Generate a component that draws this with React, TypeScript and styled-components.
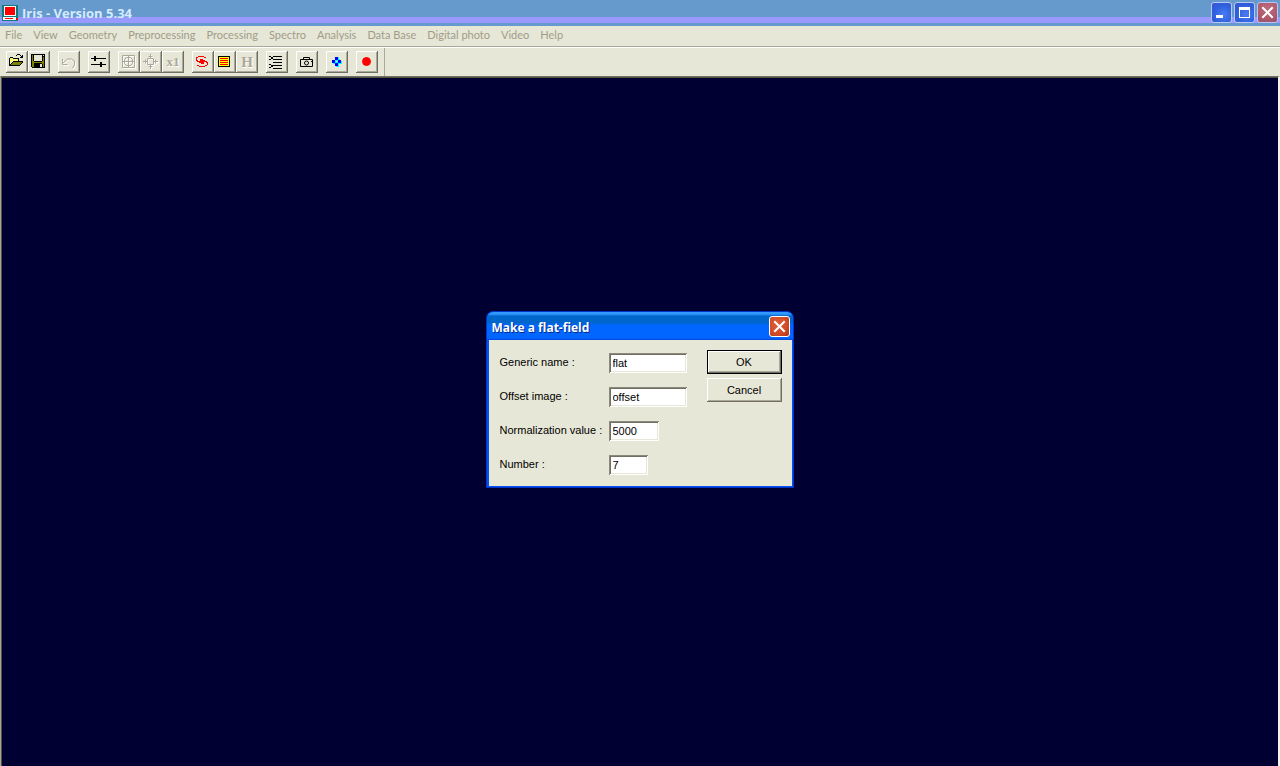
import React from "react";
import styled, { createGlobalStyle, css } from "styled-components";

const face = "#e7e7d7";
const shade = "#aca899";
const uiFont = '"Liberation Sans", Arial, sans-serif';
const menuFont = 'Lato, "Liberation Sans", sans-serif';
const captionFont = '"Open Sans", "Noto Sans", sans-serif';

const GlobalStyle = createGlobalStyle`
  *, *::before, *::after { box-sizing: border-box; }
  body { margin: 0; background: #000033; font-family: ${uiFont}; font-size: 11px; line-height: 14px; }
  button, input { font: inherit; }
`;

const AppWindow = styled.div`
  display: flex;
  flex-direction: column;
  min-height: 100vh;
  background: ${face};
`;

const TitleBar = styled.header`
  display: flex;
  align-items: center;
  gap: 4px;
  height: 26px;
  padding: 0 2px;
  background: linear-gradient(#6699cc 17px, #9999ff 17px, #9999ff 23px, #6699cc 23px);
`;

const AppTitle = styled.h1`
  flex: 1;
  margin: 0;
  font: 700 13px/16px ${captionFont};
  color: #d4ecff;
`;

const CaptionButtons = styled.div`
  display: flex;
  gap: 2px;
  padding-bottom: 1px;
`;

const captionFill = {
  blue: "radial-gradient(circle at 60% 60%, #4a7cf4, #2f5fdc 60%, #3a55c8)",
  faded: "radial-gradient(circle at 50% 30%, #c06a80, #b05a6c 60%, #94506c)",
  red: "radial-gradient(circle at 40% 40%, #e0603c, #d04a28 60%, #b03010)",
};

const CaptionButton = styled.button<{ $tone: keyof typeof captionFill }>`
  display: flex;
  flex: none;
  width: 21px;
  height: 21px;
  padding: 0;
  border: 1px solid ${(p) => (p.$tone === "red" ? "#ffffff" : "#b8c8f4")};
  border-radius: 3px;
  background: ${(p) => captionFill[p.$tone]};
`;

const MenuBar = styled.nav`
  display: flex;
  gap: 11px;
  height: 20px;
  padding: 2px 5px;
  font-family: ${menuFont};
  font-variant-ligatures: none;
`;

const MenuLink = styled.a`
  color: #9f9c88;
  text-decoration: none;
  white-space: nowrap;
`;

const ToolBar = styled.div`
  display: flex;
  height: 30px;
  border-top: 1px solid ${shade};
  box-shadow: inset 0 1px #ffffff;
  padding: 1px 0 0 6px;
`;

const ToolGroups = styled.div`
  display: flex;
  gap: 8px;
  padding: 3px 6px 0 0;
  border-right: 1px solid ${shade};
`;

const ToolGroup = styled.div`
  display: flex;
`;

const raised = css`
  box-shadow: inset -1px -1px #716f64, inset 1px 1px #ffffff, inset -2px -2px ${shade};
`;

const ToolButton = styled.button`
  display: flex;
  width: 22px;
  height: 22px;
  padding: 3px;
  border: 0;
  background: ${face};
  ${raised}
`;

const GlyphButton = styled(ToolButton)<{ $size: number }>`
  align-items: center;
  justify-content: center;
  font: 700 ${(p) => p.$size}px/16px "Liberation Serif", serif;
  color: ${shade};
  text-shadow: 1px 1px #ffffff;
`;

const Workspace = styled.main`
  flex: 1;
  display: flex;
  justify-content: center;
  align-items: flex-start;
  padding: 234px 0 16px;
  background: #000033;
  border: solid;
  border-width: 1px 2px 0 1px;
  border-color: #716f64 #f4f4ea #716f64 ${shade};
  box-shadow: inset 1px 1px #55533f;
`;

const Dialog = styled.section`
  width: 308px;
  border: 1px solid #0033cc;
  border-radius: 7px 7px 0 0;
  background: #0033cc;
`;

const DialogCaption = styled.div`
  display: flex;
  align-items: center;
  justify-content: space-between;
  height: 28px;
  padding: 2px 3px 1px 5px;
  border-radius: 6px 6px 0 0;
  background: linear-gradient(#3399ff 2px, #0066cc 4px, #0066cc 11px, #0066ff 13px, #0066ff 26px, #0044dd);
`;

const DialogTitle = styled.h2`
  margin: 0;
  padding-top: 2px;
  font: 700 12px/16px ${captionFont};
  color: #ffffff;
  text-shadow: 1px 1px #00298c;
`;

const DialogForm = styled.form`
  display: flex;
  justify-content: space-between;
  padding: 10px 10px 11px 11px;
  border: solid #0055ee;
  border-width: 0 1px 1px 2px;
  background: ${face};
`;

const Fields = styled.div`
  display: flex;
  flex-direction: column;
  gap: 14px;
  padding-top: 3px;
`;

const Field = styled.div`
  display: grid;
  grid-template-columns: 109px auto;
  justify-content: start;
`;

const FieldLabel = styled.label`
  padding-top: 2px;
  color: #000000;
`;

const TextBox = styled.input<{ $width: number }>`
  width: ${(p) => p.$width}px;
  height: 20px;
  padding: 0 0 0 4px;
  border: 0;
  border-radius: 0;
  background: #ffffff;
  color: #000000;
  outline: none;
  box-shadow: inset 1px 1px #8c8a7c, inset -1px -1px #ffffff, inset 2px 2px #716f64, inset -2px -2px ${face};
`;

const Actions = styled.div`
  display: flex;
  flex-direction: column;
  gap: 4px;
`;

const PushButton = styled.button<{ $primary?: boolean }>`
  width: 75px;
  height: 24px;
  padding: 0;
  border: ${(p) => (p.$primary ? "1px solid #000000" : "0")};
  background: ${face};
  color: #000000;
  ${raised}
`;

const Svg = styled.svg`
  display: block;
  flex: none;
`;

const inks: Record<string, string> = {
  k: "#000000",
  y: "#ffff00",
  w: "#ffffff",
  o: "#808000",
  b: "#0000ff",
  c: "#00ffff",
  r: "#ff0000",
};

/* Draws a bitmap icon: one character for each pixel, "." is clear. */
function Bitmap({ rows }: { rows: string[] }) {
  return (
    <Svg width="16" height="16" viewBox="0 0 16 16" shapeRendering="crispEdges" aria-hidden="true">
      {rows.flatMap((row, y) =>
        [...row].map((ch, x) =>
          inks[ch] ? <rect key={`${x}-${y}`} x={x} y={y} width="1" height="1" fill={inks[ch]} /> : null,
        ),
      )}
    </Svg>
  );
}

const folderRows = [
  "........kkk.....",
  ".......k...k.k..",
  "............kk..",
  ".kkk.......kkk..",
  "kywykkkkkk......",
  "kwywywywyk......",
  "kywywywywk......",
  "kwywkkkkkkkkkk..",
  "kywkoooooooook..",
  "kwkoooooooook...",
  "kkoooooooook....",
  "kkkkkkkkkkk.....",
];

const saveRows = [
  "kkkkkkkkkkkkkk",
  "kok........k.k",
  "kok........kkk",
  "kok........kok",
  "kok........kok",
  "kok........kok",
  "kok........kok",
  "kookkkkkkkkook",
  "kooooooooooook",
  "kookkkkkkkkook",
  "kookkkkkk..kok",
  "kookkkkkk..kok",
  "kookkkkkk..kok",
  ".kkkkkkkkkkkkk",
];

const plusRows = [
  "",
  "",
  "",
  "......bbbc",
  "......bbbc",
  "......bbbcc",
  "...bbbcccbbb",
  "...bbbc.cbbbc",
  "...bbbcccbbbc",
  "....ccbbbcccc",
  "......bbbc",
  "......bbbc",
  ".......ccc",
];

const galaxyRows = [
  "",
  "",
  "...rrrrrr",
  ".rr......rr",
  ".r",
  ".r...rrr",
  ".rr..rrrrr",
  "..rrrrrrrrrr",
  "....rrrrr..rr",
  "......rrr...r",
  "............r",
  "..rr......rr",
  "....rrrrrr",
];

const listRows = [
  "",
  "",
  ".kkkkkkkkkkkk",
  ".kyyyyyyyyyyk",
  ".kyrrrrrrrryk",
  ".kyyyyyyyyyyk",
  ".kyrrrrrrrryk",
  ".kyyyyyyyyyyk",
  ".kyrrrrrrrryk",
  ".kyyyyyyyyyyk",
  ".kyrrrrrrrryk",
  ".kyyyyyyyyyyk",
  ".kkkkkkkkkkkk",
];

const scriptRows = [
  "",
  "",
  "kk..kkkkkkkkk",
  "..kk",
  "..kk",
  "kk..kkkkkkkkk",
  "",
  "",
  "....kkkkkkkkk",
  "",
  "kk..",
  "..kkkkkkkkkkk",
  "..kk",
  "kk..",
  "....kkkkkkkkk",
];

function LineIcon({ color = "#000000", children }: { color?: string; children: React.ReactNode }) {
  return (
    <Svg width="16" height="16" viewBox="0 0 16 16" fill="none" stroke={color} aria-hidden="true">
      {children}
    </Svg>
  );
}

function EngravedIcon({ d }: { d: string }) {
  return (
    <LineIcon color={shade}>
      <path d={d} stroke="#ffffff" transform="translate(1 1)" />
      <path d={d} />
    </LineIcon>
  );
}

const undoPath = "M1.5 5v5.500h5M1.500 9.500l5-4.500h4l3 2v4l-2 3";
const centerPath = "M1.500 1.500h12v12h-12zM7.500 2v11M2 7.500h11M5.500 3.500h4l2 2v4l-2 2h-4l-2-2v-4z";
const expandPath =
  "M4.500 4.500h6v6h-6zM7.500 0v4M5.500 2.500h4M7.500 11v4M5.500 12.500h4M0 7.500h4M2.500 5.500v4M11 7.500h4M12.500 5.500v4";

function CloseMark() {
  return (
    <Svg width="19" height="19" viewBox="0 0 19 19" aria-hidden="true">
      <path d="M5 5l9 9M14 5l-9 9" stroke="#ffffff" strokeWidth="2" strokeLinecap="square" />
    </Svg>
  );
}

function AppLogo() {
  return (
    <Svg width="16" height="16" viewBox="0 0 16 16" shapeRendering="crispEdges" aria-hidden="true">
      <path d="M0 0h16v16H0z" fill="#0b7c7c" />
      <path d="M2 1h12v10H2zM1 12h13v3H1z" fill="#ffffff" />
      <path d="M3 2h10v8H3zM3 13h8v1H3zM14 13h2v2h-2z" fill="#ff0000" />
    </Svg>
  );
}

const menus = [
  "File",
  "View",
  "Geometry",
  "Preprocessing",
  "Processing",
  "Spectro",
  "Analysis",
  "Data Base",
  "Digital photo",
  "Video",
  "Help",
];

const fields = [
  { id: "generic", label: "Generic name :", value: "flat", width: 78 },
  { id: "offset", label: "Offset image :", value: "offset", width: 78 },
  { id: "normal", label: "Normalization value :", value: "5000", width: 50 },
  { id: "number", label: "Number :", value: "7", width: 39 },
];

export default function App() {
  return (
    <AppWindow>
      <GlobalStyle />
      <TitleBar>
        <AppLogo />
        <AppTitle>Iris - Version 5.34</AppTitle>
        <CaptionButtons>
          <CaptionButton $tone="blue" aria-label="Minimize">
            <Svg width="19" height="19" viewBox="0 0 19 19">
              <path d="M4 12h7v3H4z" fill="#ffffff" />
            </Svg>
          </CaptionButton>
          <CaptionButton $tone="blue" aria-label="Maximize">
            <Svg width="19" height="19" viewBox="0 0 19 19" shapeRendering="crispEdges">
              <path d="M4 4h11v11H4zM5 7v7h9V7z" fill="#ffffff" fillRule="evenodd" />
            </Svg>
          </CaptionButton>
          <CaptionButton $tone="faded" aria-label="Close">
            <CloseMark />
          </CaptionButton>
        </CaptionButtons>
      </TitleBar>

      <MenuBar>
        {menus.map((name) => (
          <MenuLink key={name} href="#">
            {name}
          </MenuLink>
        ))}
      </MenuBar>

      <ToolBar role="toolbar">
        <ToolGroups>
          <ToolGroup>
            <ToolButton aria-label="Open">
              <Bitmap rows={folderRows} />
            </ToolButton>
            <ToolButton aria-label="Save">
              <Bitmap rows={saveRows} />
            </ToolButton>
          </ToolGroup>
          <ToolGroup>
            <ToolButton aria-label="Undo">
              <EngravedIcon d={undoPath} />
            </ToolButton>
          </ToolGroup>
          <ToolGroup>
            <ToolButton aria-label="Threshold">
              <Svg width="16" height="16" viewBox="0 0 16 16" shapeRendering="crispEdges" aria-hidden="true">
                <path d="M0 4h15v1H0zM3 2h2v5H3zM0 10h15v1H0zM9 8h2v5H9z" fill="#000000" />
              </Svg>
            </ToolButton>
          </ToolGroup>
          <ToolGroup>
            <ToolButton aria-label="Center">
              <EngravedIcon d={centerPath} />
            </ToolButton>
            <ToolButton aria-label="Expand">
              <EngravedIcon d={expandPath} />
            </ToolButton>
            <GlyphButton $size={13}>x1</GlyphButton>
          </ToolGroup>
          <ToolGroup>
            <ToolButton aria-label="Galaxy">
              <Bitmap rows={galaxyRows} />
            </ToolButton>
            <ToolButton aria-label="List">
              <Bitmap rows={listRows} />
            </ToolButton>
            <GlyphButton $size={15}>H</GlyphButton>
          </ToolGroup>
          <ToolGroup>
            <ToolButton aria-label="Commands">
              <Bitmap rows={scriptRows} />
            </ToolButton>
          </ToolGroup>
          <ToolGroup>
            <ToolButton aria-label="Camera">
              <LineIcon>
                <path d="M1.500 5.500h12v7h-12zM4.500 5v-1.500h6V5M12 7.500h1" />
                <circle cx="7.500" cy="9" r="2" />
              </LineIcon>
            </ToolButton>
          </ToolGroup>
          <ToolGroup>
            <ToolButton aria-label="Add">
              <Bitmap rows={plusRows} />
            </ToolButton>
          </ToolGroup>
          <ToolGroup>
            <ToolButton aria-label="Record">
              <LineIcon color="#ff0000">
                <circle cx="7.500" cy="7.500" r="4" fill="#ff0000" />
              </LineIcon>
            </ToolButton>
          </ToolGroup>
        </ToolGroups>
      </ToolBar>

      <Workspace>
        <Dialog role="dialog" aria-labelledby="dialog-title">
          <DialogCaption>
            <DialogTitle id="dialog-title">Make a flat-field</DialogTitle>
            <CaptionButton $tone="red" aria-label="Close dialog">
              <CloseMark />
            </CaptionButton>
          </DialogCaption>
          <DialogForm onSubmit={(e) => e.preventDefault()}>
            <Fields>
              {fields.map((f) => (
                <Field key={f.id}>
                  <FieldLabel htmlFor={f.id}>{f.label}</FieldLabel>
                  <TextBox id={f.id} $width={f.width} defaultValue={f.value} autoFocus={f.id === "generic"} />
                </Field>
              ))}
            </Fields>
            <Actions>
              <PushButton type="submit" $primary>
                OK
              </PushButton>
              <PushButton type="button">Cancel</PushButton>
            </Actions>
          </DialogForm>
        </Dialog>
      </Workspace>
    </AppWindow>
  );
}
